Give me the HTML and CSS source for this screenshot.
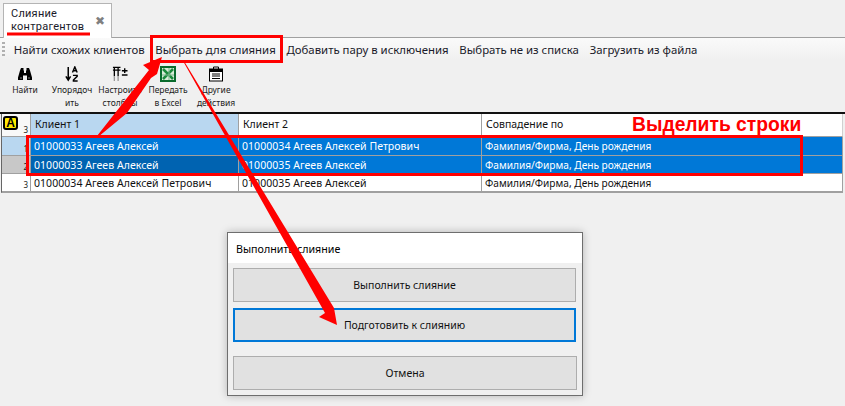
FILE: index.html
```html
<!DOCTYPE html>
<html lang="ru">
<head>
<meta charset="utf-8">
<title>Слияние контрагентов</title>
<link rel="stylesheet" href="styles.css">
</head>
<body>
<div class="tabstrip">
  <div class="tab">
    <span class="tab-title">Слияние<br>контрагентов</span>
    <span class="tab-close">✖</span>
  </div>
</div>
<nav class="menubar">
  <span class="grip"></span>
  <span class="menu-item">Найти схожих клиентов</span>
  <span class="menu-item">Выбрать для слияния</span>
  <span class="menu-item">Добавить пару в исключения</span>
  <span class="menu-item">Выбрать не из списка</span>
  <span class="menu-item">Загрузить из файла</span>
</nav>
<div class="toolbar">
  <div class="tool tool-find">
    <svg class="ico" viewBox="0 0 16 16"><path d="M1 11.500 3 4.500 4 2h2.500v2.500H7V7h2V4.500h.5V2H12l1 2.500 2 7V14H10V9.500H6V14H1z" fill="#000"/><path d="M3.500 12h1M11.500 12h1" stroke="#fff"/></svg>
    <span>Найти</span>
  </div>
  <div class="tool tool-sort">
    <svg class="ico" viewBox="0 0 17 17"><path d="M4.500 1v13M2 11l2.500 4L7 11" fill="none" stroke="#000" stroke-width="1.600"/><path d="M9 7 11.500 1 14 7M10 5h3M9.500 10H14v1L10 15v1h4.500" fill="none" stroke="#000" stroke-width="1.500"/></svg>
    <span>Упорядоч<br>ить</span>
  </div>
  <div class="tool tool-cols">
    <svg class="ico" viewBox="0 0 17 17"><path d="M1 1.500h8M1 4.500h8" fill="none" stroke="#000" stroke-width="1.300"/><path d="M2.500 1v10M6.500 1v10" fill="none" stroke="#000" stroke-width="1.400"/><path d="M2.500 11v5M6.500 11v5" fill="none" stroke="#999" stroke-width="1.400"/><path d="M10.500 5h6M13.500 2.500v5M10.500 9.500h6" fill="none" stroke="#000" stroke-width="1.500"/></svg>
    <span>Настроить<br>столбцы</span>
  </div>
  <div class="tool tool-xls">
    <svg class="ico" viewBox="0 0 16 16"><rect width="16" height="16" fill="#0a6b2d"/><rect x="2" y="2" width="12" height="12" fill="#d8ecd8"/><path d="M3 3l10 10M13 3 3 13" stroke="#1c8a3c" stroke-width="2.500"/><path d="M9 2v12M2 9h12" stroke="#7fb88f"/></svg>
    <span>Передать<br>в Excel</span>
  </div>
  <div class="tool tool-other">
    <svg class="ico" viewBox="0 0 16 16"><path d="M5.500 3V1h5v2" fill="none" stroke="#000"/><rect x="1.500" y="3" width="13" height="12" fill="#fff" stroke="#000"/><path d="M1.500 3.500h13v2h-13zM4 8h8M4 10h8M4 12.500h8" fill="#000" stroke="#000"/></svg>
    <span>Другие<br>действия</span>
  </div>
</div>
<div class="grid">
  <div class="corner"><span class="filter-a">A</span><span class="num">3</span></div>
  <div class="head head-on">Клиент 1</div>
  <div class="head">Клиент 2</div>
  <div class="head head-last">Совпадение по</div>

  <div class="rowhead rowhead-1"><span class="num">1</span></div>
  <div class="cell sel">01000033 Агеев Алексей</div>
  <div class="cell sel">01000034 Агеев Алексей Петрович</div>
  <div class="cell match sel">Фамилия/Фирма, День рождения</div>

  <div class="rowhead rowhead-2"><span class="num">2</span></div>
  <div class="cell sel active">01000033 Агеев Алексей</div>
  <div class="cell sel">01000035 Агеев Алексей</div>
  <div class="cell match sel">Фамилия/Фирма, День рождения</div>

  <div class="rowhead"><span class="num">3</span></div>
  <div class="cell">01000034 Агеев Алексей Петрович</div>
  <div class="cell">01000035 Агеев Алексей</div>
  <div class="cell match">Фамилия/Фирма, День рождения</div>
</div>

<div class="dialog">
  <div class="dialog-title">Выполнить слияние</div>
  <div class="dialog-body">
    <button class="btn">Выполнить слияние</button>
    <button class="btn btn-focus">Подготовить к слиянию</button>
    <button class="btn btn-cancel">Отмена</button>
  </div>
</div>

<svg class="marks" viewBox="0 0 845 406" width="845" height="406">
  <g fill="none" stroke="#f00">
    <path d="M7 34H90" stroke-width="3"/>
    <rect x="151.500" y="36.500" width="130" height="25" stroke-width="3"/>
    <rect x="27.500" y="136.500" width="774" height="38" stroke-width="3"/>
  </g>
  <path d="M97 136 149 70 143 65 162 57 157 74 151 78 127 113 98 137Z" fill="#f00"/>
  <path d="M183 61 184 61 334 308 337 325 319 317 325 313Z" fill="#f00"/>
</svg>
<div class="callout">Выделить строки</div>
</body>
</html>
```
FILE: styles.css
```css
* { box-sizing: border-box; }
html, body { margin: 0; padding: 0; }
body {
  position: relative;
  width: 845px;
  height: 406px;
  overflow: hidden;
  background: #f0f0f0;
  color: #000;
  font-family: "Noto Sans", "Open Sans", sans-serif;
  font-size: 11px;
}
.tabstrip {
  height: 38px;
  padding: 3px 0 0 3px;
  background: #f0f0f0;
  border-bottom: 1px solid #a0a0a0;
}
.tab {
  width: 109px;
  height: 35px;
  display: flex;
  align-items: center;
  justify-content: space-between;
  padding: 0 6px 2px 7px;
  background: #fff;
  border: 1px solid #b4b4b4;
  border-bottom: 0;
}
.tab-title {
  font-family: Roboto, "Noto Sans", sans-serif;
  font-size: 11px;
  letter-spacing: .25px;
  line-height: 13px;
  color: #1a1a2a;
}
.tab-close { color: #808080; font-size: 12px; }
.menubar {
  height: 22px;
  display: flex;
  align-items: center;
  gap: 10.700px;
  padding-left: 2px;
  background: linear-gradient(#fafafa, #f0f0f0);
  font-size: 11.400px;
}
.grip {
  width: 3px;
  height: 15px;
  margin-right: -2px;
  background: repeating-linear-gradient(#b0b0b0 0 2px, transparent 2px 4px);
}
.menu-item { color: #1a1a2a; white-space: nowrap; }
.toolbar {
  height: 54px;
  display: flex;
  padding: 6px 0 0 4px;
  border-bottom: 2px solid #111;
  font-size: 8.500px;
  line-height: 13px;
  text-align: center;
  color: #222;
}
.tool {
  display: flex;
  flex-direction: column;
  align-items: center;
  flex: none;
}
.tool span { white-space: nowrap; margin-top: 1px; }
.ico { width: 16px; height: 16px; flex: none; }
.tool-find { width: 42px; }
.tool-sort { width: 52px; }
.tool-cols { width: 44px; }
.tool-xls { width: 52px; }
.tool-other { width: 44px; }
.grid {
  display: grid;
  grid-template-columns: 29px 208px 243px 361px;
  grid-template-rows: 23px 19px 18px 18px;
  margin-left: 1px;
  width: 842px;
  background: #fff;
  border: solid #a0a0a0;
  border-width: 0 0 1px 1px;
  border-left-color: #666;
  font-size: 10.500px;
}
.corner, .rowhead {
  position: relative;
  background: #fff;
  border-right: 1px solid #a0a0a0;
  border-bottom: 1px solid #a0a0a0;
}
.corner { background: #f8f8f8; }
.rowhead-1 { background: #b9d7f0; }
.rowhead-2 { background: #c8c8c8; }
.num {
  position: absolute;
  right: 2px;
  bottom: 1px;
  font-size: 8px;
  line-height: 10px;
  color: #222;
}
.filter-a {
  position: absolute;
  left: 1px;
  top: 2px;
  width: 15px;
  height: 14px;
  border: 2px solid #000;
  border-radius: 3px;
  background: #ffe800;
  font-family: "Liberation Sans", sans-serif;
  font-weight: 700;
  font-size: 12px;
  line-height: 10px;
  text-align: center;
}
.head {
  display: flex;
  align-items: center;
  padding: 0 0 3px 4px;
  background: #fff;
  border-right: 1px solid #a0a0a0;
  border-bottom: 1px solid #a0a0a0;
  font-size: 10.500px;
  color: #111;
}
.head-on { background: #b9d7f0; }
.head-last { border-right: 1px solid #d0d0d0; }
.cell {
  display: flex;
  align-items: center;
  padding-left: 3px;
  background: #fff;
  border-right: 1px solid #a0a0a0;
  border-bottom: 1px solid #a0a0a0;
  white-space: nowrap;
  color: #111;
  letter-spacing: .05px;
}
.match { font-size: 10.150px; letter-spacing: 0; }
.sel { background: #0078d7; color: #fff; }
.active { background: #0063b1; }
.dialog {
  position: absolute;
  left: 227px;
  top: 232px;
  width: 356px;
  height: 164px;
  background: #f0f0f0;
  border: 1px solid #6e6e6e;
  box-shadow: 0 0 8px rgba(0, 0, 0, .25);
}
.dialog-title {
  height: 30px;
  padding: 1px 0 0 8px;
  display: flex;
  align-items: center;
  background: #fff;
  font-size: 10.700px;
}
.dialog-body { display: flex; flex-direction: column; padding: 5px 0 0 5px; }
.btn {
  width: 343px;
  height: 34px;
  padding: 0;
  background: #e1e1e1;
  border: 1px solid #adadad;
  font: inherit;
  font-size: 10.500px;
  color: #111;
}
.btn-focus { margin-top: 6px; border: 2px solid #0078d7; }
.btn-cancel { margin-top: 14px; width: 344px; }
.marks { position: absolute; left: 0; top: 0; pointer-events: none; }
.callout {
  position: absolute;
  left: 632px;
  top: 112px;
  color: #f00;
  font-family: "Liberation Sans", Arial, sans-serif;
  font-weight: 700;
  font-size: 19.300px;
  line-height: 26px;
  white-space: nowrap;
}
```
